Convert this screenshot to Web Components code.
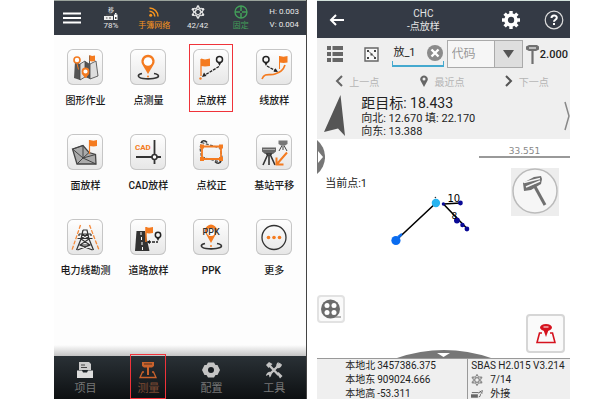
<!DOCTYPE html>
<html lang="zh-CN">
<head>
<meta charset="utf-8">
<meta name="viewport" content="width=device-width, initial-scale=1">
<title>点放样</title>
<style>
    body {
        margin: 0;
        background: #fff;
        font-family: Roboto, "Noto Sans CJK SC", sans-serif;
        color: #222;
    }
    main {
        display: grid;
        grid-template-columns: repeat(2, minmax(0, 1fr));
        column-gap: 2%;
        box-sizing: border-box;
        min-height: 100vh;
        padding: 0 5% 1px 9%;
    }
</style>
</head>
<body>
<main>
    <survey-menu></survey-menu>
    <stakeout-screen></stakeout-screen>
</main>

<script>
// Prefix for the small shared components
const prefix = 'gnss';

// All icons, each one is [viewBox width, viewBox height, svg content]
const icons = {
    menu: [18, 12, '<path d="M0 1.500h18M0 6h18M0 10.500h18" stroke="#fff" stroke-width="2"/>'],
    receiver: [14, 7, '<path d="M0 3h9v4H0z" fill="#eee"/><path d="M2 2h6M2 5h1.500M5 5h2" stroke="#555"/><path d="M10 1.500h3.500V7H10z" fill="#fff"/><path d="M11 0h1.500v1.500H11z" fill="#fff"/><path d="M11 4h1.500v2H11z" fill="#444"/>'],
    feed: [10, 10, '<circle cx="1.700" cy="8.300" r="1.500" fill="#f7941d"/><path d="M.5 4.200a5.300 5.300 0 0 1 5.300 5.300M.5 1a8.500 8.500 0 0 1 8.500 8.500" fill="none" stroke="#f7941d" stroke-width="1.500"/>'],
    satellites: [14, 14, '<g fill="none" stroke="currentColor" stroke-width="1"><ellipse cx="7" cy="7" rx="2.400" ry="5.500"/><ellipse cx="7" cy="7" rx="2.400" ry="5.500" transform="rotate(60 7 7)"/><ellipse cx="7" cy="7" rx="2.400" ry="5.500" transform="rotate(120 7 7)"/></g><g fill="currentColor"><circle cx="7" cy="1.500" r="1.300"/><circle cx="7" cy="12.500" r="1.300"/><circle cx="2" cy="4.200" r="1.300"/><circle cx="12" cy="4.200" r="1.300"/><circle cx="2" cy="9.800" r="1.300"/><circle cx="12" cy="9.800" r="1.300"/></g>'],
    fixed: [14, 14, '<circle cx="7" cy="7" r="6" fill="none" stroke="#43a05a" stroke-width="1.300"/><path d="M7 1v5M7 8v5M1 7h5M8 7h5" stroke="#43a05a" stroke-width="1.500"/>'],

    // Tiles of the function menu
    mapping: [36, 36, '<path d="M8 12l5 3v16l-6-2zM18 12l5 3v15l-5-2z" fill="#555"/><path d="M13 15l5-3v16l-5 3zM23 15l6-3 2 15-8 3z" fill="#ddd" stroke="#444" stroke-width=".8"/><path d="M22.500 19V6.500" stroke="#555"/><path d="M22.500 6l2.500 1 3-.5v5.500l-3 .5-2.500-.5z" fill="#f47b20"/><path d="M10 14.500l1.500 6M18.500 29l-3.500-5h7z" stroke="#f47b20" fill="#f47b20"/><circle cx="10" cy="11" r="3" fill="#fff" stroke="#f47b20" stroke-width="1.600"/><circle cx="18.500" cy="22.500" r="3" fill="#fff" stroke="#f47b20" stroke-width="1.800"/>'],
    measure: [36, 36, '<path d="M12 24.500c-5 1-5 4 1 5s16 0 15.500-2.600c-.2-1.400-2-2-4.500-2.400" fill="none" stroke="#333" stroke-width="1.600"/><path d="M18 25l-6-10a6.600 6.600 0 1 1 12 0z" fill="#f47b20"/><circle cx="18" cy="12.500" r="4.300" fill="#fff"/><circle cx="18" cy="27.500" r="1" fill="#f47b20"/>'],
    point: [36, 36, '<path d="M8 10v17" stroke="#f47b20" stroke-width="1.300"/><path d="M8 9.500l4 1 5-1v7.500l-5 .5-4-.5z" fill="#f47b20"/><circle cx="7.500" cy="29.500" r="1.200" fill="#f47b20"/><path d="M26 17.500L12 26" stroke="#222" stroke-width="1.300" stroke-dasharray="3 1"/><path d="M9 28l2-4.500 2.500 3.500z" fill="#222"/><circle cx="26.500" cy="10.500" r="3" fill="none" stroke="#222" stroke-width="1.500"/><path d="M24.500 13h4l-2 4z" fill="#222"/>'],
    line: [36, 36, '<path d="M6 30c3-7 8-3 13-5s8-3 10-9" fill="none" stroke="#f47b20" stroke-width="1.700"/><path d="M23.500 20V7" stroke="#f47b20"/><path d="M23.500 7l4 .8 4-.8v6.500l-4 .5-4-.5z" fill="#f47b20"/><path d="M11 17l8 4.500" stroke="#222" stroke-width="1.300" stroke-dasharray="3 1"/><path d="M22 23l-4.500-.3 2-3.500z" fill="#222"/><circle cx="10" cy="10.500" r="3" fill="none" stroke="#222" stroke-width="1.500"/><path d="M8 13h4l-2 4z" fill="#222"/>'],
    area: [36, 36, '<path d="M5.500 15L16 11.500l6 7 6.500 2L29 30H10z" fill="#aaa" stroke="#444" stroke-width="1.300"/><path d="M5.500 15L16 24 10 30M16 11.500V24l12.500-3.500M16 24l13 6M6 15l10-3.500M22 18.500L16 24" fill="none" stroke="#444"/><path d="M22.500 20V6" stroke="#f47b20" stroke-width="1.200"/><path d="M22.500 6l4 .8 3.500-.8v6l-3.500.5-4-.5z" fill="#f47b20"/>'],
    cad: [36, 36, '<text x="5" y="16" font-size="8" font-weight="700" fill="#f47b20">CAD</text><path d="M24.500 6v14.500M24.500 25.500V30M6 23h16M27 23h4" stroke="#333" stroke-width="1.800"/><circle cx="24.500" cy="23" r="2.500" fill="#fff" stroke="#333" stroke-width="1.600"/>'],
    correct: [36, 36, '<path d="M8.500 8.500L27 14l2 9-2 5-18.500-5L7 14z" fill="none" stroke="#555" stroke-width="1.300" stroke-dasharray="3 1.500"/><path d="M8 9c1-3 4-3 6-.5M28 27c-1 3-4 3-6 .5" fill="none" stroke="#333" stroke-width="1.600"/><path d="M9 12.500h19v12.500H9z" fill="none" stroke="#f47b20" stroke-width="1.800"/><path d="M7 10.500h4v4H7zM26 10.500h4v4h-4zM7 23h4v4H7zM26 23h4v4h-4z" fill="#f47b20"/>'],
    base: [36, 36, '<path d="M6 13.500h14v4l-3 2.500H9l-3-2.500z" fill="#666"/><path d="M7 15.500h12" stroke="#aaa"/><path d="M10 20h6M12 20L7 31M13 21v10M14 20l5 11" stroke="#333" stroke-width="1.600"/><path d="M22.500 6.500h9V10L29 11.500h-4L22.500 10z" fill="#777"/><path d="M26 11.500l-3 5.500M28 11.500l3 5.500M27 12v4" stroke="#444"/><path d="M31 18.500L21 30M20.500 23.500V30.500h7" fill="none" stroke="#f47b20" stroke-width="2"/>'],
    tower: [36, 36, '<path d="M13.500 6L5 31M22.500 6L32 31" stroke="#f58b3c" stroke-width="1.300" stroke-dasharray="4 1.500"/><path d="M16 11h4l2 9 4.500 11M16 11l-2 9-4.500 11M12 15h12M10.500 19.500h15M14 20l9 6M22 20l-9 6M12.500 26h11M12.500 26l13 5M23.500 26l-13 5M15 15l6 4M21 15l-6 4M12 15v2M24 15v2" fill="none" stroke="#333" stroke-width="1.200"/>'],
    road: [36, 36, '<path d="M6.500 12H15l4.500 20H5z" fill="#333"/><path d="M11 13v3M11.500 18v3M12 23v3M12.500 28v3" stroke="#fff"/><path d="M16 23V8" stroke="#f47b20" stroke-width="1.500"/><path d="M16 8l3 .7 4-.7v6l-4 .6-3-.6z" fill="#f47b20"/><path d="M18 23h10" stroke="#222" stroke-width="1.400" stroke-dasharray="3 1"/><path d="M16.500 23l3.500-2v4z" fill="#222"/><circle cx="28" cy="16" r="2.700" fill="none" stroke="#222" stroke-width="1.500"/><path d="M26 18h4l-2 4z" fill="#222"/>'],
    ppk: [36, 36, '<path d="M12 24.500c-5 1-5 4 1 5s16 0 15.500-2.600c-.2-1.400-2-2-4.500-2.400" fill="none" stroke="#333" stroke-width="1.600"/><path d="M18 24l-5-9a6 6 0 1 1 10 0z" fill="#f47b20"/><circle cx="18" cy="13" r="4" fill="#fff"/><circle cx="18" cy="27" r="1" fill="#f47b20"/><text x="18" y="16" font-size="9" font-weight="500" text-anchor="middle" fill="#333">PPK</text>'],
    more: [36, 36, '<circle cx="18" cy="18.500" r="12" fill="none" stroke="#333" stroke-width="1.300"/><g fill="#f47b20"><circle cx="12.500" cy="18.500" r="1.800"/><circle cx="18" cy="18.500" r="1.800"/><circle cx="23.500" cy="18.500" r="1.800"/></g>'],

    // Bottom tabs
    project: [18, 18, '<path d="M3 1h10l2 2v6H3z" fill="#ccc"/><path d="M5 4h4M5 6.500h6" stroke="#444"/><path d="M1 9.500h5l1 2h4l1-2h5V17H1z" fill="#ddd"/>'],
    survey: [18, 18, '<path d="M3 1h12v4l-2 1.500H5L3 5z" fill="#c9622c"/><path d="M5 3h8" stroke="#55301f"/><path d="M8 6h2v8H8z" fill="#c9622c"/><path d="M5 11H3.500L1 16.500h16L14.500 11H13" fill="none" stroke="#c9622c" stroke-width="1.300"/>'],
    config: [18, 18, '<path d="M6 1.500h6l1.500 2.500h2L18 9l-2.500 5h-2L12 16.500H6L4.500 14h-2L0 9l2.500-5h2z" fill="#c4c4c4"/><circle cx="9" cy="9" r="3" fill="#171c20"/>'],
    tools: [18, 18, '<path d="M3 3l10.500 11M15.500 2.500L4 14" stroke="#c4c4c4" stroke-width="2.400"/><path d="M1 4l3-3 3.500 2-4 4z" fill="#c4c4c4"/><path d="M12 12.500l1.500-1.500 4 4-2.500 2.500z" fill="#c4c4c4"/><path d="M17 3l-3 1.500L13.500 1A4 4 0 0 0 12 7a4 4 0 0 0 5-4zM1 15l3-1.500.5 3A4 4 0 0 0 6 11a4 4 0 0 0-5 4z" fill="#c4c4c4"/>'],

    // Stakeout screen
    back: [15, 12, '<path d="M15 6H2M7 1L2 6l5 5" fill="none" stroke="#fff" stroke-width="2"/>'],
    gear: [20, 20, '<circle cx="10" cy="10" r="5" fill="none" stroke="#fff" stroke-width="3.600"/><path d="M10 1v3M10 16v3M1 10h3M16 10h3M3.600 3.600l2.200 2.200M14.200 14.200l2.200 2.200M3.600 16.400l2.200-2.200M14.200 5.800l2.200-2.200" stroke="#fff" stroke-width="3.400"/>'],
    help: [20, 20, '<circle cx="10" cy="10" r="8.800" fill="none" stroke="#ddd" stroke-width="1.200"/><path d="M7.500 8c0-3.500 5.300-3.300 5.300-.3 0 2-2.800 2-2.800 4M10 13v2" fill="none" stroke="#fff" stroke-width="2"/>'],
    list: [16, 16, '<path d="M0 0h4v4H0zM5.500 0H16v4H5.500zM0 6h4v4H0zM5.500 6H16v4H5.500zM0 12h4v4H0zM5.500 12H16v4H5.500z" fill="#666"/>'],
    points: [15, 15, '<path d="M1 1h13v13H1z" fill="#f8f8f8" stroke="#666" stroke-width="1.400"/><path d="M5 4.500l6 6" stroke="#666"/><path d="M3 3h2v2H3zM10 3h2v2h-2zM3 10h2v2H3zM10 10h2v2h-2zM6.500 6.500h2v2h-2z" fill="#444"/>'],
    clear: [16, 16, '<circle cx="8" cy="8" r="8" fill="#8b8b8b"/><path d="M4.500 4.500l7 7M11.500 4.500l-7 7" stroke="#fff" stroke-width="2.400"/>'],
    pole: [13, 19, '<path d="M0 1.500L3 0h8l2 1.500v3L10 6H3L0 4.500z" fill="#707070"/><path d="M3 3h7" stroke="#eee" stroke-width="1.200"/><path d="M6.500 4v15" stroke="#707070" stroke-width="2.200"/>'],
    prev: [8, 12, '<path d="M7 1L2 6l5 5" fill="none" stroke="#666" stroke-width="2"/>'],
    next: [8, 12, '<path d="M1 1l5 5-5 5" fill="none" stroke="#555" stroke-width="2"/>'],
    pin: [8, 12, '<path d="M4 12L1 6.500a3.700 3.700 0 1 1 6 0z" fill="#666"/><circle cx="4" cy="4" r="1.500" fill="#eee"/>'],
    heading: [22, 42, '<path d="M16.500 0L21 41l-7-7.500L0 37z" fill="#555"/>'],
    expand: [6, 30, '<path d="M1 1l4 14-4 14" fill="none" stroke="#888" stroke-width="1.500"/>'],
    drawer: [8, 34, '<path d="M0 0a22 22 0 0 1 0 34z" fill="#777"/><path d="M1 11l5 6-5 6z" fill="#fff"/>'],
    rod: [48, 48, '<circle cx="24" cy="23" r="22" fill="#f6f6f6" stroke="#bbb" stroke-width="1.500"/><path d="M12 15l11-6 7-1 1 3-1 5-10 6-7 1z" fill="#707070"/><path d="M13 14.500l16-4M15 19l14-6" stroke="#f6f6f6" stroke-width="1.500"/><path d="M23 17l11 20" stroke="#707070" stroke-width="3"/>'],
    film: [20, 20, '<circle cx="9.500" cy="10" r="9.500" fill="#6c6c6c"/><path d="M13 18h7" stroke="#6c6c6c"/><g fill="#fff"><circle cx="6" cy="6.500" r="2.500"/><circle cx="13" cy="6.500" r="2.500"/><circle cx="6" cy="13.500" r="2.500"/><circle cx="13" cy="13.500" r="2.500"/></g>'],
    locate: [20, 20, '<path d="M6 9H3.500L1 18.500h18L16.500 9H14" fill="none" stroke="#d5121e" stroke-width="1.600"/><ellipse cx="10" cy="3.500" rx="6" ry="3.500" fill="#d5121e"/><path d="M7.500 3h5" stroke="#fff"/><path d="M7.500 6h5L10 13z" fill="#d5121e"/>'],
    plug: [14, 10, '<path d="M0 5h8v4H0z" fill="#666"/><path d="M1 3h8M9 8c3 0 1-3 3-4M10 1l3 3M9 4l3-3M13 0v3" fill="none" stroke="#555"/>'],
    handle: [94, 8, '<path d="M0 8Q47-8 94 8z" fill="#777"/><path d="M40 3h13l-6.500 4z" fill="#fff"/>'],
    dropdown: [11, 8, '<path d="M0 0h11L5.500 8z" fill="#555"/>']
};

class Icon extends HTMLElement {

    constructor() {
        super();
        this.attachShadow({mode: 'open'});
    }

    // The attributes are readable only when the element is attached
    connectedCallback() {
        const [width, height, content] = icons[this.getAttribute('name')];
        // "width" makes the icon smaller or bigger than it was drawn
        const shown = this.getAttribute('width') || width;
        this.shadowRoot.innerHTML = `
            <style>
                :host { display: inline-flex; flex: none; }
                svg { display: block; }
            </style>
            <svg width="${shown}" viewBox="0 0 ${width} ${height}" aria-hidden="true">${content}</svg>
        `;
    }

}

// One function of the menu: tile with an icon and its name in the slot
class Tile extends HTMLElement {

    constructor() {
        super();
        this.attachShadow({mode: 'open'});
    }

    connectedCallback() {
        this.shadowRoot.innerHTML = `
            <style>
                :host { display: flex; justify-content: center; }
                button {
                    display: flex;
                    flex-direction: column;
                    align-items: center;
                    gap: 8px;
                    padding: 4px 3px 2px;
                    border: 1px solid transparent;
                    background: none;
                    color: #1a1a1a;
                    font: 500 10px/16px Roboto, "Noto Sans CJK SC", sans-serif;
                    white-space: nowrap;
                }
                :host([active]) button { border-color: #f0333a; }
                .tile {
                    border-radius: 6px;
                    background: linear-gradient(#fff, #e6e6e6);
                    box-shadow: inset 0 0 0 1px #c6c6c6;
                }
            </style>
            <button type="button">
                <gnss-icon class="tile" name="${this.getAttribute('icon')}"></gnss-icon>
                <slot></slot>
            </button>
        `;
    }

}

class Tab extends HTMLElement {

    constructor() {
        super();
        this.attachShadow({mode: 'open'});
    }

    connectedCallback() {
        this.shadowRoot.innerHTML = `
            <style>
                :host { display: flex; justify-content: center; }
                /* the frame of the active tab sticks out over the bar */
                button {
                    display: flex;
                    flex-direction: column;
                    align-items: center;
                    gap: 2px;
                    margin-top: -2px;
                    padding: 6px 6px 0;
                    border: 1px solid transparent;
                    background: none;
                    color: #777;
                    font: 11px/15px Roboto, "Noto Sans CJK SC", sans-serif;
                }
                :host([active]) button { border-color: #f0333a; color: #7d4a33; }
            </style>
            <button type="button">
                <gnss-icon name="${this.getAttribute('icon')}"></gnss-icon>
                <slot></slot>
            </button>
        `;
    }

}

// Left screen
class SurveyMenu extends HTMLElement {

    constructor() {
        super();
        this.attachShadow({mode: 'open'});
        this.shadowRoot.innerHTML = `
            <style>
                :host {
                    display: flex;
                    flex-direction: column;
                    border-right: 1px solid #444;
                    background: #fdfdfd;
                }
                header {
                    display: grid;
                    grid-template-columns: 35fr repeat(5, 43fr);
                    align-items: center;
                    height: 34px;
                    border-top: 1px solid #9aa39c;
                    background: #343a43;
                    color: #e8e8e8;
                    font-size: 8px;
                    line-height: 11px;
                }
                header > * {
                    display: flex;
                    flex-direction: column;
                    align-items: center;
                    white-space: nowrap;
                }
                header button { padding: 0; border: 0; background: none; }
                .stat { justify-content: flex-end; gap: 1px; height: 26px; }
                .rover { gap: 0; }
                .rover small { font-size: 6px; line-height: 7px; }
                .network { gap: 3px; color: #f7941d; }
                .fix { color: #43a05a; }
                .error { line-height: 13px; }
                .functions {
                    flex: 1;
                    display: grid;
                    grid-template-columns: repeat(4, 1fr);
                    align-content: start;
                    row-gap: 17px;
                    padding-top: 9px;
                }
                .edge { height: 11px; background: linear-gradient(#fdfdfd, #c4c4c4); }
                nav {
                    display: grid;
                    grid-template-columns: repeat(4, 1fr);
                    height: 43px;
                    background: linear-gradient(#2a3136, #0d1012);
                }
            </style>
            <header>
                <button type="button" aria-label="菜单"><gnss-icon name="menu"></gnss-icon></button>
                <div class="stat rover"><small>移</small><gnss-icon name="receiver"></gnss-icon><span>78%</span></div>
                <div class="stat network"><gnss-icon name="feed"></gnss-icon><span>手簿网络</span></div>
                <div class="stat"><gnss-icon name="satellites"></gnss-icon><span>42/42</span></div>
                <div class="stat fix"><gnss-icon name="fixed"></gnss-icon><span>固定</span></div>
                <div class="error"><span>H: 0.003</span><span>V: 0.004</span></div>
            </header>
            <div class="functions">
                <gnss-tile icon="mapping">图形作业</gnss-tile>
                <gnss-tile icon="measure">点测量</gnss-tile>
                <gnss-tile icon="point" active>点放样</gnss-tile>
                <gnss-tile icon="line">线放样</gnss-tile>
                <gnss-tile icon="area">面放样</gnss-tile>
                <gnss-tile icon="cad">CAD放样</gnss-tile>
                <gnss-tile icon="correct">点校正</gnss-tile>
                <gnss-tile icon="base">基站平移</gnss-tile>
                <gnss-tile icon="tower">电力线勘测</gnss-tile>
                <gnss-tile icon="road">道路放样</gnss-tile>
                <gnss-tile icon="ppk">PPK</gnss-tile>
                <gnss-tile icon="more">更多</gnss-tile>
            </div>
            <div class="edge"></div>
            <nav>
                <gnss-tab icon="project">项目</gnss-tab>
                <gnss-tab icon="survey" active>测量</gnss-tab>
                <gnss-tab icon="config">配置</gnss-tab>
                <gnss-tab icon="tools">工具</gnss-tab>
            </nav>
        `;
    }

}

// Map of the stakeout: plot, scale and the buttons that float over it
class StakeoutMap extends HTMLElement {

    constructor() {
        super();
        this.attachShadow({mode: 'open'});
        this.shadowRoot.innerHTML = `
            <style>
                :host { display: block; position: relative; background: #fff; overflow: hidden; }
                .plot { position: absolute; inset: 0; width: 100%; height: 100%; }
                button { display: grid; place-items: center; padding: 0; border: 0; background: none; }
                button, .scale, .current { position: absolute; }
                .current { left: 8px; top: 37px; font-size: 11px; line-height: 16px; }
                .scale {
                    right: 0;
                    top: 8px;
                    width: 36%;
                    box-sizing: border-box;
                    border-bottom: 2px solid #999;
                    color: #888;
                    font: 9px/9px "DejaVu Sans", sans-serif;
                    text-align: center;
                }
                .drawer { left: 0; top: 1px; }
                .rod { right: 11px; top: 29px; background: #ededed; }
                .film, .locate {
                    background: #fafafa;
                    border: 2px solid #e2e2e2;
                    border-radius: 4px;
                }
                .film { left: 0; bottom: 35px; width: 28px; height: 28px; }
                .locate { right: 5px; bottom: 5px; width: 39px; height: 39px; border-color: #d6d6d6; }
                .handle { left: 0; right: 0; bottom: 0; }
            </style>
            <svg class="plot" viewBox="0 0 252 219" role="img" aria-label="放样图">
                <path d="M118.500 64L79 101M126 65l17-1M126 65l24 25" fill="none" stroke="#000" stroke-width="1.600"/>
                <circle cx="78.500" cy="101.500" r="4.600" fill="#0a6cf0"/>
                <path d="M80 97l4-3 1 2-3 3z" fill="#0a6cf0"/>
                <circle cx="118.500" cy="64" r="4.200" fill="#28b4f0"/>
                <circle cx="118" cy="58.500" r=".8" fill="#333"/>
                <g fill="#0a0a96">
                    <circle cx="126" cy="65" r="1.700"/>
                    <circle cx="143" cy="64" r="2.400"/>
                    <circle cx="139.500" cy="81.500" r="2.900"/>
                    <circle cx="145" cy="86" r="2.200"/>
                    <circle cx="149.500" cy="90" r="2.400"/>
                </g>
                <g font-family="DejaVu Sans, sans-serif" fill="#000">
                    <text x="130" y="63" font-size="10">10</text>
                    <text x="134" y="80" font-size="9">8</text>
                </g>
            </svg>
            <span class="current">当前点:1</span>
            <span class="scale">33.551</span>
            <button class="drawer" type="button" aria-label="展开"><gnss-icon name="drawer"></gnss-icon></button>
            <button class="rod" type="button" aria-label="测量"><gnss-icon name="rod"></gnss-icon></button>
            <button class="film" type="button" aria-label="图层"><gnss-icon name="film"></gnss-icon></button>
            <button class="locate" type="button" aria-label="定位"><gnss-icon name="locate"></gnss-icon></button>
            <button class="handle" type="button" aria-label="收起"><gnss-icon name="handle"></gnss-icon></button>
        `;
    }

}

// Right screen
class StakeoutScreen extends HTMLElement {

    constructor() {
        super();
        this.attachShadow({mode: 'open'});
        this.shadowRoot.innerHTML = `
            <style>
                :host {
                    display: flex;
                    flex-direction: column;
                    background: #efefef;
                }
                button { display: flex; align-items: center; padding: 0; border: 0; background: none; font: inherit; color: inherit; }
                header {
                    display: grid;
                    grid-template-columns: 18fr 48fr 21fr 13fr;
                    align-items: center;
                    justify-items: center;
                    height: 37px;
                    border-top: 1px solid #d3e2dc;
                    background: #343a45;
                    color: #e4e4e4;
                    text-align: center;
                }
                .back { justify-self: start; padding-left: 12px; }
                h1 { margin: 0; font-size: 10px; font-weight: 400; line-height: 13px; }
                .search {
                    display: grid;
                    grid-template-columns: minmax(0, 72fr) minmax(0, 51fr) minmax(0, 76fr) minmax(0, 44fr);
                    gap: 3px;
                    align-items: center;
                    height: 28px;
                    padding: 2px 0;
                }
                .views { display: flex; gap: 21px; padding-left: 10px; }
                .name {
                    display: flex;
                    align-items: center;
                    height: 24px;
                    border: solid #45a9cf;
                    border-width: 0 1px 2px;
                    border-image: linear-gradient(transparent 80%, #45a9cf 80%) 1;
                }
                input {
                    flex: 1;
                    min-width: 0;
                    padding: 0;
                    border: 0;
                    outline: 0;
                    background: none;
                    color: #222;
                    font: 11px/20px Roboto, "Noto Sans CJK SC", sans-serif;
                }
                .code {
                    display: grid;
                    grid-template-columns: 1fr 28px;
                    height: 28px;
                    box-sizing: border-box;
                    border: 1px solid #aaa;
                    background: #f6f6f6;
                }
                select {
                    grid-area: 1 / 1 / 2 / 3;
                    appearance: none;
                    padding: 0 0 0 4px;
                    border: 0;
                    border-radius: 0;
                    background: none;
                    color: #999;
                    font: 12px/24px Roboto, "Noto Sans CJK SC", sans-serif;
                }
                .arrow {
                    grid-area: 1 / 2;
                    display: grid;
                    place-items: center;
                    border-left: 1px solid #aaa;
                    background: #dedede;
                    pointer-events: none;
                }
                .height { display: flex; align-items: center; gap: 1px; font-size: 11px; font-weight: 500; }
                .steps {
                    display: grid;
                    grid-template-columns: 85fr 84fr 65fr;
                    height: 22px;
                    padding-left: 18px;
                    color: #b4b4b4;
                    font-size: 10px;
                }
                .steps button { gap: 6px; }
                .target {
                    display: flex;
                    align-items: center;
                    gap: 15px;
                    height: 47px;
                    padding-left: 7px;
                    font-size: 11px;
                    line-height: 13px;
                }
                .target p { margin: 0; }
                .target div { flex: 1; white-space: nowrap; }
                .distance { font-size: 14px; line-height: 18px; }
                gnss-map { flex: 1; }
                footer {
                    display: grid;
                    grid-template-columns: 149fr 102fr;
                    height: 40px;
                    border-top: 1px solid #999;
                    overflow: hidden;
                    font-size: 10px;
                    line-height: 14px;
                    white-space: nowrap;
                }
                dl { display: grid; grid-template-columns: auto 1fr; column-gap: 2px; align-content: start; margin: 0; padding-left: 28px; }
                dd { margin: 0; }
                .device { border-left: 1px solid #999; padding-left: 3px; }
                .device div { display: flex; align-items: center; gap: 7px; height: 14px; }
                .device gnss-icon { color: #888; }
            </style>
            <header>
                <button class="back" type="button" aria-label="返回"><gnss-icon name="back"></gnss-icon></button>
                <h1>CHC<br>-点放样</h1>
                <button type="button" aria-label="设置"><gnss-icon name="gear"></gnss-icon></button>
                <button type="button" aria-label="帮助"><gnss-icon name="help"></gnss-icon></button>
            </header>
            <div class="search">
                <div class="views">
                    <button type="button" aria-label="列表"><gnss-icon name="list"></gnss-icon></button>
                    <button type="button" aria-label="选点"><gnss-icon name="points"></gnss-icon></button>
                </div>
                <div class="name">
                    <input type="text" value="放_1" aria-label="点名">
                    <button type="button" aria-label="清除"><gnss-icon name="clear"></gnss-icon></button>
                </div>
                <div class="code">
                    <select aria-label="代码"><option>代码</option></select>
                    <span class="arrow"><gnss-icon name="dropdown"></gnss-icon></span>
                </div>
                <div class="height"><gnss-icon name="pole"></gnss-icon><span>2.000</span></div>
            </div>
            <div class="steps">
                <button type="button"><gnss-icon name="prev"></gnss-icon>上一点</button>
                <button type="button"><gnss-icon name="pin"></gnss-icon>最近点</button>
                <button type="button"><gnss-icon name="next"></gnss-icon>下一点</button>
            </div>
            <div class="target">
                <gnss-icon name="heading"></gnss-icon>
                <div>
                    <p class="distance">距目标: 18.433</p>
                    <p>向北: 12.670 填: 22.170</p>
                    <p>向东: 13.388</p>
                </div>
                <button type="button" aria-label="更多信息"><gnss-icon name="expand"></gnss-icon></button>
            </div>
            <gnss-map></gnss-map>
            <footer>
                <dl>
                    <dt>本地北</dt><dd>3457386.375</dd>
                    <dt>本地东</dt><dd>909024.666</dd>
                    <dt>本地高</dt><dd>-53.311</dd>
                </dl>
                <div class="device">
                    <div>SBAS H2.015 V3.214</div>
                    <div><gnss-icon name="satellites" width="12"></gnss-icon>7/14</div>
                    <div><gnss-icon name="plug" width="12"></gnss-icon>外接</div>
                </div>
            </footer>
        `;
    }

}

customElements.define(`${prefix}-icon`, Icon);
customElements.define(`${prefix}-tile`, Tile);
customElements.define(`${prefix}-tab`, Tab);
customElements.define(`${prefix}-map`, StakeoutMap);
customElements.define('survey-menu', SurveyMenu);
customElements.define('stakeout-screen', StakeoutScreen);
</script>
</body>
</html>
